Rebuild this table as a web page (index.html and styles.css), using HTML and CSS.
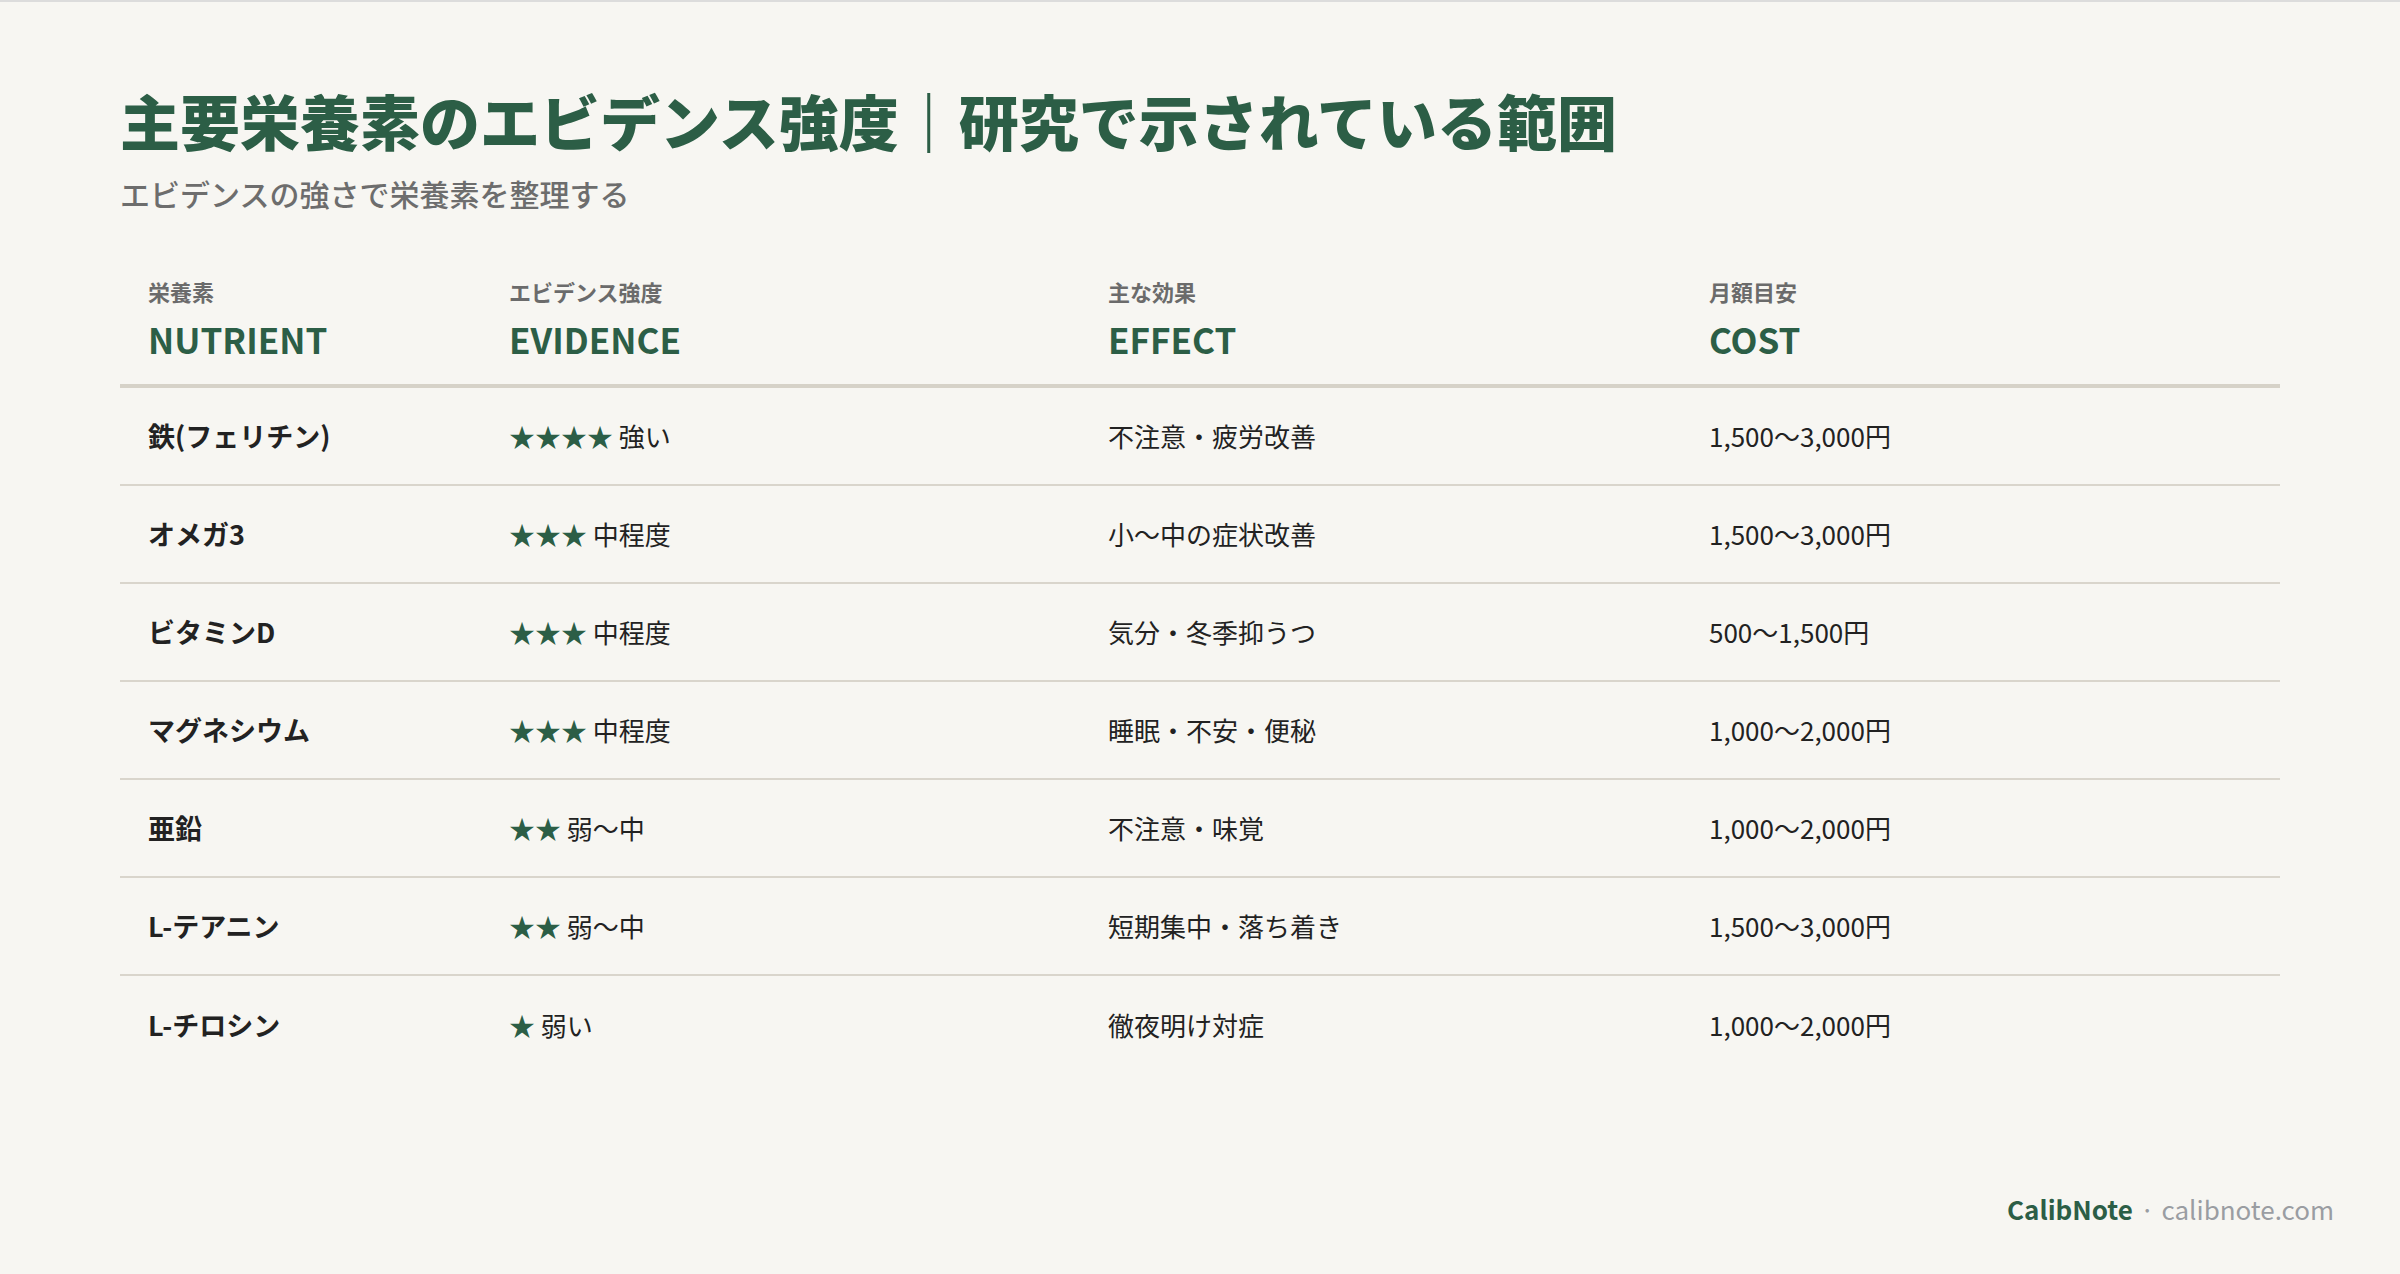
FILE: index.html
```html
<!DOCTYPE html>
<html lang="ja">
<head>
<meta charset="utf-8">
<title>主要栄養素のエビデンス強度</title>
<link rel="stylesheet" href="styles.css">
</head>
<body>
<div class="page">
  <h1 class="title">主要栄養素のエビデンス強度｜研究で示されている範囲</h1>
  <p class="subtitle">エビデンスの強さで栄養素を整理する</p>

  <div class="table">
    <div class="row head">
      <div class="cell"><div class="jp">栄養素</div><div class="en">NUTRIENT</div></div>
      <div class="cell"><div class="jp">エビデンス強度</div><div class="en">EVIDENCE</div></div>
      <div class="cell"><div class="jp">主な効果</div><div class="en">EFFECT</div></div>
      <div class="cell"><div class="jp">月額目安</div><div class="en">COST</div></div>
    </div>
    <div class="row">
      <div class="cell name">鉄(フェリチン)</div>
      <div class="cell"><span class="stars">★★★★</span> 強い</div>
      <div class="cell">不注意・疲労改善</div>
      <div class="cell">1,500〜3,000円</div>
    </div>
    <div class="row">
      <div class="cell name">オメガ3</div>
      <div class="cell"><span class="stars">★★★</span> 中程度</div>
      <div class="cell">小〜中の症状改善</div>
      <div class="cell">1,500〜3,000円</div>
    </div>
    <div class="row">
      <div class="cell name">ビタミンD</div>
      <div class="cell"><span class="stars">★★★</span> 中程度</div>
      <div class="cell">気分・冬季抑うつ</div>
      <div class="cell">500〜1,500円</div>
    </div>
    <div class="row">
      <div class="cell name">マグネシウム</div>
      <div class="cell"><span class="stars">★★★</span> 中程度</div>
      <div class="cell">睡眠・不安・便秘</div>
      <div class="cell">1,000〜2,000円</div>
    </div>
    <div class="row">
      <div class="cell name">亜鉛</div>
      <div class="cell"><span class="stars">★★</span> 弱〜中</div>
      <div class="cell">不注意・味覚</div>
      <div class="cell">1,000〜2,000円</div>
    </div>
    <div class="row">
      <div class="cell name">L-テアニン</div>
      <div class="cell"><span class="stars">★★</span> 弱〜中</div>
      <div class="cell">短期集中・落ち着き</div>
      <div class="cell">1,500〜3,000円</div>
    </div>
    <div class="row last">
      <div class="cell name">L-チロシン</div>
      <div class="cell"><span class="stars">★</span> 弱い</div>
      <div class="cell">徹夜明け対症</div>
      <div class="cell">1,000〜2,000円</div>
    </div>
  </div>

  <footer class="footer"><span class="brand">CalibNote</span><span class="dot">·</span><span class="site">calibnote.com</span></footer>
</div>
</body>
</html>
```

FILE: styles.css
```css
html, body {
  margin: 0;
  padding: 0;
}
body {
  background: #f7f6f2;
  border-top: 2px solid #dcdcdc;
  font-family: "Noto Sans CJK JP", "Noto Sans", sans-serif;
  color: #222222;
}
.page {
  box-sizing: border-box;
  height: 1272px;
  padding: 82px 120px 0 120px;
  display: flex;
  flex-direction: column;
}
.title {
  margin: 0;
  font-size: 60px;
  line-height: 72px;
  font-weight: 900;
  color: #2c5e46;
}
.subtitle {
  margin: 16px 0 0 0;
  font-size: 30px;
  line-height: 42px;
  font-weight: 500;
  color: #6d6d6d;
}
.table {
  margin-top: 63px;
}
.row {
  display: grid;
  grid-template-columns: 361px 599px 601px 1fr;
  border-bottom: 2px solid #d9d5cc;
  height: 98px;
  box-sizing: border-box;
  align-items: center;
  font-size: 26px;
  line-height: 34px;
}
.row.head {
  height: auto;
  align-items: start;
  border-bottom: 4px solid #d6d2c8;
  padding-bottom: 23px;
}
.row.last {
  border-bottom: none;
}
.cell {
  padding-left: 28px;
}
.jp {
  font-size: 22px;
  line-height: 28px;
  font-weight: 700;
  color: #6b6b6b;
}
.en {
  margin-top: 12px;
  font-size: 35px;
  line-height: 44px;
  font-weight: 700;
  color: #2c5e46;
}
.name {
  font-size: 27px;
  font-weight: 700;
  color: #222222;
}
.stars {
  color: #2c5e46;
}
.footer {
  margin-top: auto;
  align-self: flex-end;
  margin-right: -54px;
  padding-bottom: 48px;
  font-size: 26px;
  line-height: 34px;
}
.brand {
  font-weight: 700;
  color: #2c5e46;
}
.dot {
  color: #9a9da2;
  margin: 0 7px;
}
.site {
  color: #9a9da2;
}
```
